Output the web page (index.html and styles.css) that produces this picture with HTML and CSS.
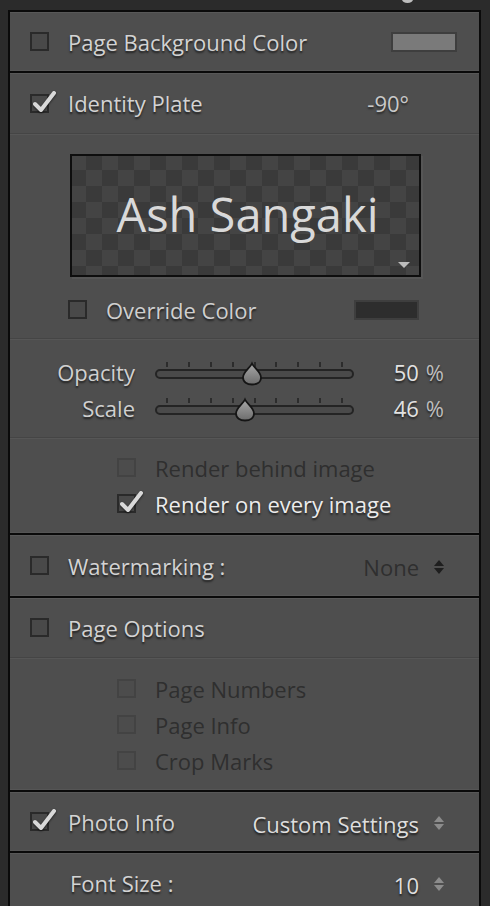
FILE: index.html
```html
<!DOCTYPE html>
<html>
<head>
<meta charset="utf-8">
<link rel="stylesheet" href="styles.css">
</head>
<body>
<div class="topbar"><span class="blob"></span></div>
<div class="panel">
  <section class="sec sec-h61">
    <div class="row">
      <span class="cb"></span>
      <span class="label">Page Background Color</span>
      <span class="swatch swatch-light"></span>
    </div>
  </section>

  <section class="sec sec-ident">
    <div class="row row-h60">
      <span class="cb"><svg class="check" viewBox="0 0 26 22"><path d="M4 13 L10 19 L23 2" /></svg></span>
      <span class="label">Identity Plate</span>
      <span class="value deg">-90°</span>
    </div>
    <div class="subline"></div>
    <div class="plate">
      <span class="plate-text">Ash Sangaki</span>
      <span class="plate-tri"></span>
    </div>
    <div class="override">
      <span class="cb"></span>
      <span class="label">Override Color</span>
      <span class="swatch swatch-dark"></span>
    </div>
    <div class="subline sl-19"></div>
    <div class="sliders">
      <div class="srow">
        <span class="slabel">Opacity</span>
        <div class="track">
          <div class="ticks"><i></i><i></i><i></i><i></i><i></i><i></i><i></i><i></i><i></i></div>
          <div class="bar"></div>
          <svg class="thumb" style="left:86px" viewBox="0 0 22 24"><defs><linearGradient id="g1" x1="0" y1="0" x2="0" y2="1"><stop offset="0" stop-color="#a8a8a8"/><stop offset="1" stop-color="#6c6c6c"/></linearGradient></defs><path d="M11 1.5 C13 6 20 10 20 15.5 C20 20 16 22.5 11 22.5 C6 22.5 2 20 2 15.5 C2 10 9 6 11 1.5 Z" fill="url(#g1)" stroke="#151515" stroke-width="1.8"/></svg>
        </div>
        <span class="sval"><b>50</b><em>%</em></span>
      </div>
      <div class="srow">
        <span class="slabel">Scale</span>
        <div class="track">
          <div class="ticks"><i></i><i></i><i></i><i></i><i></i><i></i><i></i><i></i><i></i></div>
          <div class="bar"></div>
          <svg class="thumb" style="left:79px" viewBox="0 0 22 24"><path d="M11 1.5 C13 6 20 10 20 15.5 C20 20 16 22.5 11 22.5 C6 22.5 2 20 2 15.5 C2 10 9 6 11 1.5 Z" fill="url(#g1)" stroke="#151515" stroke-width="1.8"/></svg>
        </div>
        <span class="sval"><b>46</b><em>%</em></span>
      </div>
    </div>
    <div class="subline sl-17"></div>
    <div class="opts">
      <div class="opt disabled"><span class="cb"></span><span class="label">Render behind image</span></div>
      <div class="opt"><span class="cb"><svg class="check" viewBox="0 0 26 22"><path d="M4 13 L10 19 L23 2" /></svg></span><span class="label bright">Render on every image</span></div>
    </div>
  </section>

  <section class="sec sec-h63">
    <div class="row">
      <span class="cb"></span>
      <span class="label">Watermarking :</span>
      <span class="value dim">None</span>
      <span class="updown dark"><i class="up"></i><i class="down"></i></span>
    </div>
  </section>

  <section class="sec sec-page">
    <div class="row row-h59">
      <span class="cb"></span>
      <span class="label">Page Options</span>
    </div>
    <div class="subline"></div>
    <div class="opts opts-page">
      <div class="opt disabled"><span class="cb"></span><span class="label">Page Numbers</span></div>
      <div class="opt disabled"><span class="cb"></span><span class="label">Page Info</span></div>
      <div class="opt disabled"><span class="cb"></span><span class="label">Crop Marks</span></div>
    </div>
  </section>

  <section class="sec sec-h61">
    <div class="row">
      <span class="cb"><svg class="check" viewBox="0 0 26 22"><path d="M4 13 L10 19 L23 2" /></svg></span>
      <span class="label">Photo Info</span>
      <span class="value drop">Custom Settings</span>
      <span class="updown"><i class="up"></i><i class="down"></i></span>
    </div>
  </section>

  <section class="sec sec-last">
    <div class="row row-h60">
      <span class="label fs">Font Size :</span>
      <span class="value drop">10</span>
      <span class="updown"><i class="up"></i><i class="down"></i></span>
    </div>
  </section>
</div>
</body>
</html>
```
FILE: styles.css
```css
* { box-sizing: border-box; }
html, body { margin: 0; padding: 0; }
body {
  background: #2b2b2b;
  width: 490px;
  height: 906px;
  overflow: hidden;
  font-family: "Open Sans", "Lato", sans-serif;
  color: #d2d2d2;
}
.topbar {
  height: 10px;
  position: relative;
}
.blob {
  position: absolute;
  left: 402px;
  top: -4px;
  width: 11px;
  height: 7px;
  border-radius: 50%;
  background: #bdbdbd;
}
.panel {
  margin-left: 8px;
  width: 473px;
  border-left: 2px solid #0a0a0a;
  border-right: 2px solid #0a0a0a;
  background: #4e4e4e;
}
.sec {
  border-top: 2px solid #0a0a0a;
  background: #4e4e4e;
  box-shadow: inset 0 1px 0 #585858, inset 0 -1px 0 #555555;
}
.sec-h61 { height: 61px; display: flex; }
.sec-h63 { height: 63px; display: flex; }
.sec-ident { height: 462px; }
.sec-page { height: 194px; }
.sec-last { height: 62px; }

.row {
  display: flex;
  align-items: center;
  padding-left: 20px;
  padding-right: 22px;
  width: 100%;
}
.row-h60 { height: 60px; }
.row-h59 { height: 59px; }

.cb {
  position: relative;
  flex: none;
  width: 19px;
  height: 19px;
  border: 2px solid #2a2a2a;
  background: #494949;
}
.check {
  position: absolute;
  left: -1px;
  top: -5px;
  width: 26px;
  height: 22px;
  overflow: visible;
}
.check path {
  fill: none;
  stroke: #d9d9d9;
  stroke-width: 4;
  stroke-linecap: round;
  stroke-linejoin: round;
  filter: drop-shadow(0 1px 1px rgba(0,0,0,0.6));
}
.label {
  margin-left: 19px;
  font-size: 22px;
  line-height: 24px;
  color: #d3d3d3;
  text-shadow: 0 2px 2px rgba(0,0,0,0.6);
  white-space: nowrap;
}
.label.bright { color: #ececec; }
.label.fs { margin-left: 40px; }
.value {
  margin-left: auto;
  font-size: 22px;
  line-height: 24px;
  white-space: nowrap;
}
.value.deg {
  margin-right: 48px;
  color: #c9c9c9;
  text-shadow: 0 2px 2px rgba(0,0,0,0.5);
}
.value.dim { color: #2f2f2f; margin-top: 3px; }
.value.drop {
  color: #dedede;
  text-shadow: 0 2px 2px rgba(0,0,0,0.6);
  margin-top: 4px;
}
.swatch {
  margin-left: auto;
  flex: none;
}
.swatch-light {
  width: 66px;
  height: 20px;
  border: 2px solid #3e3e3e;
  background: #7a7a7a;
}
.updown {
  flex: none;
  display: flex;
  flex-direction: column;
  gap: 2px;
  margin-left: 15px;
  margin-right: 13px;
  margin-top: 2px;
}
.updown i {
  display: block;
  width: 0;
  height: 0;
  border-left: 5px solid transparent;
  border-right: 5px solid transparent;
}
.updown .up { border-bottom: 6px solid #8c8c8c; }
.updown .down { border-top: 6px solid #8c8c8c; }
.updown.dark .up { border-bottom-color: #1e1e1e; }
.updown.dark .down { border-top-color: #1e1e1e; }

.subline {
  height: 2px;
  border-top: 1px solid #454545;
  border-bottom: 1px solid #565656;
}
.sl-19 { margin-top: 19px; }
.sl-17 { margin-top: 17px; }

.plate {
  position: relative;
  margin: 19px 0 0 60px;
  width: 351px;
  height: 123px;
  border: 2px solid #0e0e0e;
  background-color: #444444;
  background-image: repeating-conic-gradient(#3a3a3a 0 25%, #444444 0 50%);
  background-size: 32px 32px;
  background-position: -2px -2px;
  box-shadow: 2px 2px 0 #565656;
  display: flex;
  align-items: center;
  justify-content: center;
}
.plate-text {
  font-size: 47px;
  line-height: 50px;
  color: #d9d9d9;
  margin-top: -3px;
  margin-left: 4px;
}
.plate-tri {
  position: absolute;
  right: 9px;
  bottom: 7px;
  width: 0;
  height: 0;
  border-left: 6px solid transparent;
  border-right: 6px solid transparent;
  border-top: 6px solid #bdbdbd;
}

.override {
  display: flex;
  align-items: center;
  height: 19px;
  margin-top: 23px;
  padding-left: 58px;
}
.override .label { color: #cfcfcf; }
.swatch-dark {
  width: 65px;
  height: 20px;
  margin-right: 60px;
  border: 2px solid #3e3e3e;
  background: #2d2d2d;
}

.sliders {
  padding-top: 20px;
  display: flex;
  flex-direction: column;
  gap: 12px;
}
.srow {
  display: flex;
  align-items: center;
  height: 24px;
}
.slabel {
  width: 125px;
  text-align: right;
  font-size: 22px;
  line-height: 24px;
  color: #d0d0d0;
  text-shadow: 0 2px 2px rgba(0,0,0,0.6);
}
.track {
  position: relative;
  margin-left: 20px;
  width: 199px;
  height: 24px;
}
.ticks {
  position: absolute;
  left: 11px;
  right: 11px;
  top: 2px;
  display: flex;
  justify-content: space-between;
}
.ticks i {
  display: block;
  width: 2px;
  height: 5px;
  background: #2c2c2c;
}
.bar {
  position: absolute;
  left: 0;
  right: 0;
  top: 9px;
  height: 10px;
  border: 2px solid #242424;
  border-radius: 5px;
  background: #4a4a4a;
}
.thumb {
  position: absolute;
  top: 2px;
  width: 22px;
  height: 24px;
  overflow: visible;
}
.sval {
  display: flex;
  justify-content: flex-end;
  align-items: center;
  width: 90px;
  font-size: 22px;
  line-height: 24px;
  text-shadow: 0 2px 2px rgba(0,0,0,0.55);
}
.sval b { font-weight: normal; color: #e2e2e2; }
.sval em { font-style: normal; color: #bdbdbd; margin-left: 7px; }

.opts {
  display: flex;
  flex-direction: column;
  gap: 17px;
  padding-top: 19px;
  padding-left: 107px;
}
.opts-page { padding-top: 20px; }
.opt {
  display: flex;
  align-items: center;
  height: 19px;
}
.opt.disabled .cb {
  border-color: #434343;
  background: #4c4c4c;
}
.opt.disabled .label {
  color: #2f2f2f;
  text-shadow: none;
}
```
